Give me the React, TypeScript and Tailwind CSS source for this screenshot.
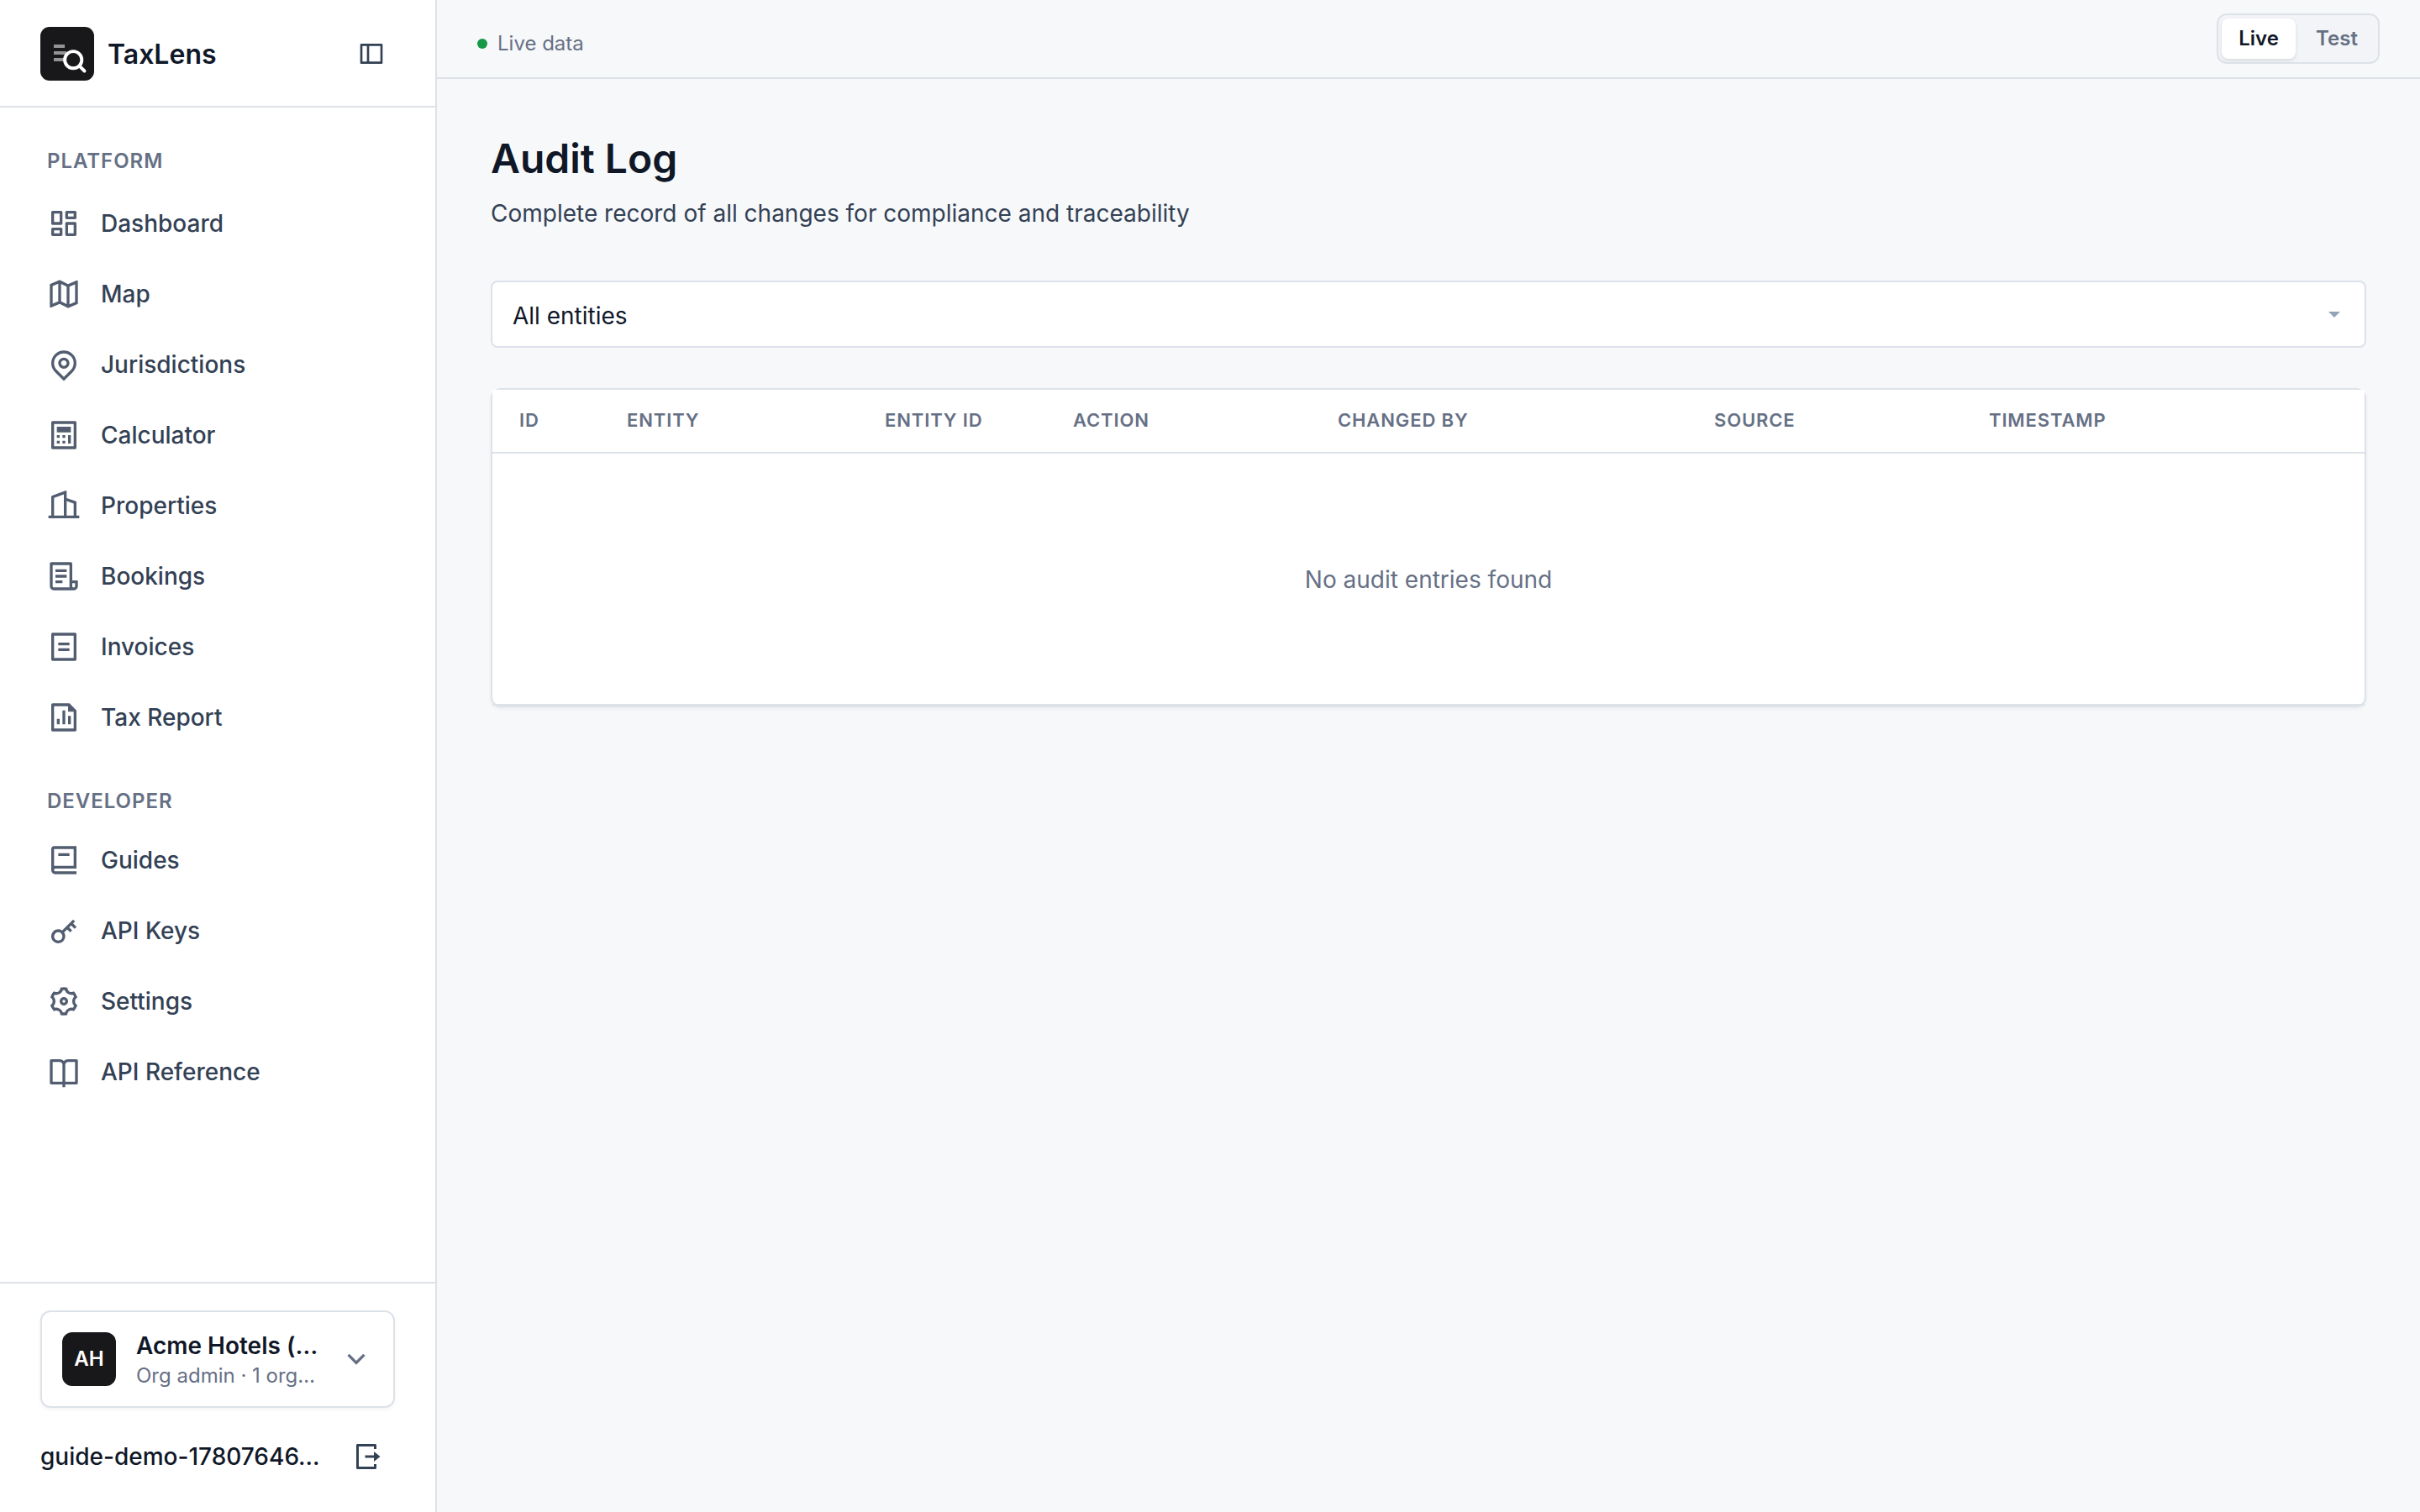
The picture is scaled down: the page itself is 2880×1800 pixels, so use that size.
import React from "react";
import type { IconType } from "react-icons";
import {
  RiArrowDownSLine,
  RiBillLine,
  RiBook2Line,
  RiBookOpenLine,
  RiBuilding2Line,
  RiCalculatorLine,
  RiDashboardLine,
  RiFileChartLine,
  RiFileList3Line,
  RiKey2Line,
  RiLogoutBoxRLine,
  RiMap2Line,
  RiMapPinLine,
  RiSettings3Line,
  RiSideBarLine,
} from "react-icons/ri";

type NavItem = { label: string; icon: IconType };

const platform: NavItem[] = [
  { label: "Dashboard", icon: RiDashboardLine },
  { label: "Map", icon: RiMap2Line },
  { label: "Jurisdictions", icon: RiMapPinLine },
  { label: "Calculator", icon: RiCalculatorLine },
  { label: "Properties", icon: RiBuilding2Line },
  { label: "Bookings", icon: RiFileList3Line },
  { label: "Invoices", icon: RiBillLine },
  { label: "Tax Report", icon: RiFileChartLine },
];

const developer: NavItem[] = [
  { label: "Guides", icon: RiBook2Line },
  { label: "API Keys", icon: RiKey2Line },
  { label: "Settings", icon: RiSettings3Line },
  { label: "API Reference", icon: RiBookOpenLine },
];

function Logo() {
  return (
    <svg viewBox="0 0 64 64" className="size-16 shrink-0" fill="none">
      <rect width="64" height="64" rx="11" fill="#18181b" />
      <g fill="#949495">
        <rect x="16" y="21" width="13" height="4" />
        <rect x="16" y="29" width="15" height="4" />
        <rect x="16" y="37" width="13" height="4" />
      </g>
      <circle cx="39.2" cy="39.2" r="10.1" fill="#18181b" stroke="#fff" strokeWidth="3.9" />
      <path d="M46.6 46.6l5.9 5.9" stroke="#fff" strokeWidth="3.9" strokeLinecap="round" />
    </svg>
  );
}

function NavList({ items }: { items: NavItem[] }) {
  return (
    <ul className="flex flex-col gap-2">
      {items.map(({ label, icon: Icon }) => (
        <li key={label} className="flex h-[76px] items-center gap-6 px-2">
          <Icon className="size-10 shrink-0 text-[#525d70]" />
          <span className="text-[28px] font-medium text-[#334155]">{label}</span>
        </li>
      ))}
    </ul>
  );
}

function Sidebar() {
  return (
    <aside className="flex w-[520px] shrink-0 flex-col border-r-2 border-[#dde2e9] bg-white">
      <div className="flex h-32 items-center border-b-2 border-[#dde2e9] pt-0.5 pr-[60px] pl-12">
        <Logo />
        <span className="ml-4 pt-px text-[32px] font-semibold text-[#101828]">TaxLens</span>
        <RiSideBarLine className="ml-auto size-8 text-[#334155]" />
      </div>
      <nav className="flex-1 px-12 pt-[46px]">
        <h2 className="mb-[18px] h-9 px-2 text-2xl leading-9 font-semibold tracking-[0.04em] text-[#667085]">PLATFORM</h2>
        <NavList items={platform} />
        <h2 className="mt-[44px] mb-[14px] h-9 px-2 text-2xl leading-9 font-semibold tracking-[0.04em] text-[#667085]">DEVELOPER</h2>
        <NavList items={developer} />
      </nav>
      <div className="h-[274px] border-t-2 border-[#dde2e9] px-12 pt-8">
        <div className="flex h-[116px] w-[422px] items-center rounded-xl border-2 border-[#dde2e9] bg-white pr-6 pl-6 shadow-[0_2px_4px_rgba(15,23,42,0.05)]">
          <div className="flex size-16 shrink-0 items-center justify-center rounded-xl bg-[#18181b] text-2xl font-semibold text-white">AH</div>
          <div className="ml-6 min-w-0 flex-1 pt-0.5 whitespace-nowrap">
            <div className="text-[28px] leading-[36px] font-semibold text-[#101828]">Acme Hotels (…</div>
            <div className="text-2xl leading-[35px] text-[#667085]">Org admin · 1 org…</div>
          </div>
          <RiArrowDownSLine className="size-10 shrink-0 text-[#667085]" />
        </div>
        <div className="mt-[34px] flex h-12 items-center justify-between pr-4">
          <span className="text-[28px] font-medium text-[#101828]">guide-demo-17807646…</span>
          <RiLogoutBoxRLine className="size-9 text-[#334155]" />
        </div>
      </div>
    </aside>
  );
}

function TopBar() {
  return (
    <header className="flex h-[94px] shrink-0 items-start justify-between border-b-2 border-[#dde2e9] pt-4 pr-12 pl-12">
      <div className="mt-[18px] flex items-center gap-3 text-2xl leading-9 text-[#667085]">
        <span className="size-3 rounded-full bg-[#159947]" />
        Live data
      </div>
      <div className="flex h-[60px] gap-1 rounded-xl border-2 border-[#dde2e9] bg-[#f2f4f7] p-1 text-2xl font-semibold">
        <span className="flex w-[88px] items-center justify-center rounded-lg bg-white text-[#101828] shadow-[0_2px_4px_rgba(15,23,42,0.12)]">Live</span>
        <span className="flex w-[90px] items-center justify-center text-[#667085]">Test</span>
      </div>
    </header>
  );
}

function AuditTable() {
  return (
    <section className="mt-12 h-[380px] rounded-xl border-2 border-[#dde2e9] bg-white shadow-[0_2px_4px_rgba(15,23,42,0.05)]">
      <div className="flex h-[76px] items-center border-b-2 border-[#dde2e9] bg-white pb-0.5 text-[22px] font-semibold tracking-[0.04em] text-[#667085]">
        <span className="w-32 pl-8">ID</span>
        <span className="w-[307px] pl-8">ENTITY</span>
        <span className="w-[224px] pl-8">ENTITY ID</span>
        <span className="w-[315px] pl-8">ACTION</span>
        <span className="w-[448px] pl-8">CHANGED BY</span>
        <span className="w-[327px] pl-8">SOURCE</span>
        <span className="pl-8">TIMESTAMP</span>
      </div>
      <div className="flex h-[300px] items-center justify-center border-b-2 border-[#dde2e9] pt-0.5 text-[28px] text-[#667085]">No audit entries found</div>
    </section>
  );
}

export default function App() {
  return (
    <div className="flex h-[1800px] w-[2880px] overflow-hidden bg-[#f7f8fa] font-['Inter',sans-serif]">
      <Sidebar />
      <div className="flex min-w-0 flex-1 flex-col">
        <TopBar />
        <main className="px-16 pt-[65px]">
          <h1 className="text-[48px] leading-[60px] font-semibold text-[#101828]">Audit Log</h1>
          <p className="mt-[15px] text-[28px] leading-10 text-[#334155]">Complete record of all changes for compliance and traceability</p>
          <div className="mt-[60px] flex h-20 items-center justify-between rounded-lg border-2 border-[#dde1ea] bg-white pr-[29px] pl-6 text-[28px] text-[#101828]">
            <span className="pt-1">All entities</span>
            <svg viewBox="0 0 14 7" className="h-[7px] w-[14px]" fill="#94a3b8">
              <path d="M0 0h14L7 7z" />
            </svg>
          </div>
          <AuditTable />
        </main>
      </div>
    </div>
  );
}
